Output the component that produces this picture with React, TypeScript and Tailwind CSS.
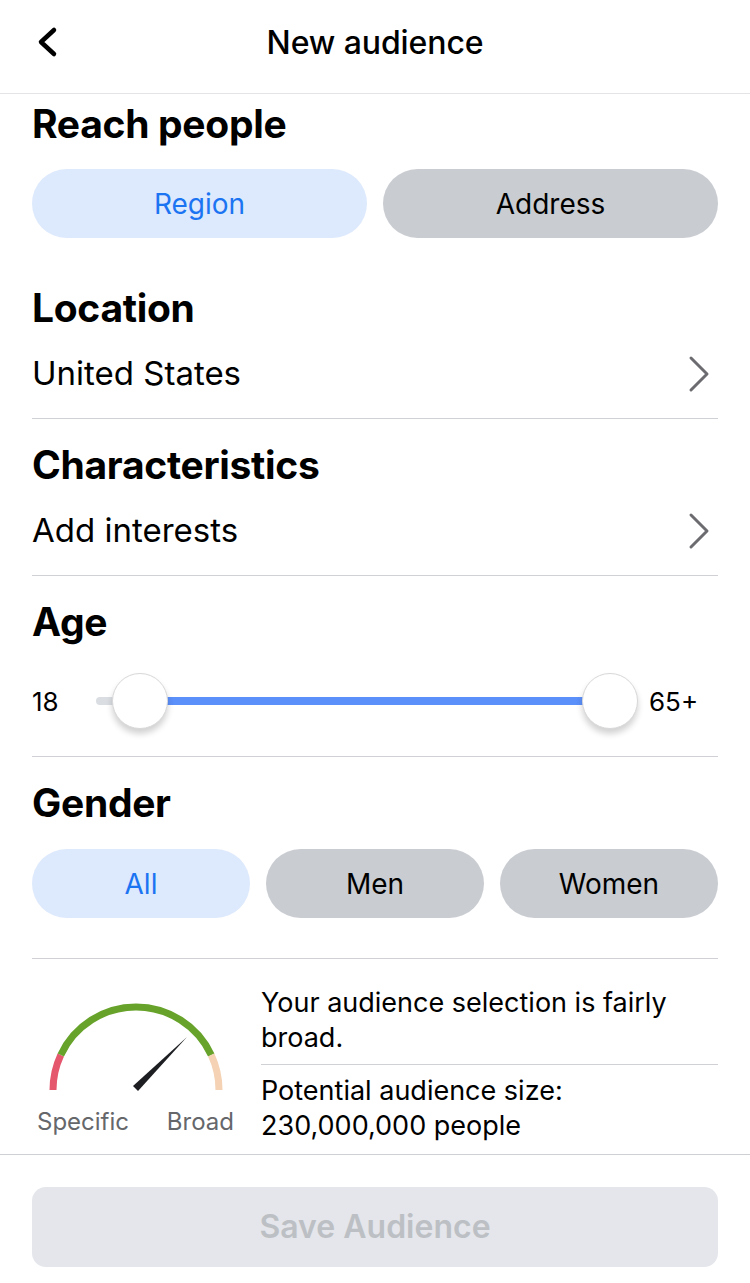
function Segmented({ options, active, cols }: { options: string[]; active: number; cols: string }) {
  return (
    <div className={`grid ${cols} gap-[16px]`}>
      {options.map((o, i) => (
        <button
          key={o}
          className={
            "flex h-[69px] items-center justify-center rounded-full text-[28px] " +
            (i === active ? "bg-[#dde9fc] text-[#1b74f2]" : "bg-[#c9ccd1] text-black")
          }
        >
          {o}
        </button>
      ))}
    </div>
  );
}

function Heading({ children }: { children: React.ReactNode }) {
  return <h2 className="h-[44px] text-[39px] font-bold leading-[44px] tracking-[-0.3px] text-black">{children}</h2>;
}

function Chevron() {
  return (
    <svg width="24" height="38" viewBox="0 0 24 38" className="mr-[6px]">
      <polyline points="3,3 19,19 3,35" fill="none" stroke="#6b6b70" strokeWidth="3" strokeLinecap="round" strokeLinejoin="round" />
    </svg>
  );
}

function LinkRow({ label }: { label: string }) {
  return (
    <div className="flex h-[89px] items-center justify-between border-b border-[#d0d1d5]">
      <span className="text-[33px] text-black">{label}</span>
      <Chevron />
    </div>
  );
}

function Gauge() {
  const cx = 104;
  const cy = 96;
  const r = 83;
  const pt = (deg: number) => {
    const a = (deg * Math.PI) / 180;
    return `${cx + r * Math.cos(a)} ${cy - r * Math.sin(a)}`;
  };
  return (
    <svg width="210" height="100" viewBox="0 0 210 100" className="block">
      <path d={`M ${pt(180)} A ${r} ${r} 0 0 1 ${pt(155)}`} fill="none" stroke="#e4576d" strokeWidth="7" />
      <path d={`M ${pt(155)} A ${r} ${r} 0 0 1 ${pt(25)}`} fill="none" stroke="#67a32b" strokeWidth="7" />
      <path d={`M ${pt(25)} A ${r} ${r} 0 0 1 ${pt(0)}`} fill="none" stroke="#f4d2b3" strokeWidth="7" />
      <polygon points="101,92 106,97 155,43" fill="#1c1e21" />
    </svg>
  );
}

export default function App() {
  return (
    <div className="flex h-[1283px] w-[750px] flex-col bg-white font-['Inter',sans-serif] text-black">
      <header className="relative flex h-[94px] shrink-0 items-center justify-center border-b border-[#e4e4e6] pb-[8px]">
        <svg width="26" height="36" viewBox="0 0 26 36" className="absolute left-[34px] top-[24px]">
          <polyline points="20,6 7,18 20,30" fill="none" stroke="#000" strokeWidth="4.5" strokeLinecap="round" strokeLinejoin="round" />
        </svg>
        <h1 className="text-[32px] font-medium tracking-[-0.1px]">New audience</h1>
      </header>

      <main className="flex-1 px-[32px]">
        <div className="mt-[8px]">
          <Heading>Reach people</Heading>
        </div>
        <div className="mt-[23px]">
          <Segmented options={["Region", "Address"]} active={0} cols="grid-cols-2" />
        </div>

        <div className="mt-[48px]">
          <Heading>Location</Heading>
          <LinkRow label="United States" />
        </div>

        <div className="mt-[24px]">
          <Heading>Characteristics</Heading>
          <LinkRow label="Add interests" />
        </div>

        <div className="mt-[24px]">
          <Heading>Age</Heading>
          <div className="flex h-[113px] items-center border-b border-[#d0d1d5] pt-[2px]">
            <span className="w-[64px] text-[26px]">18</span>
            <div className="relative h-[56px] flex-1">
              <div className="absolute left-0 top-[24px] h-[8px] w-[30px] rounded-full bg-[#dadde1]" />
              <div className="absolute left-[42px] right-[28px] top-[24px] h-[8px] bg-[#5b8ff9]" />
              <div className="absolute left-[16px] top-0 h-[56px] w-[56px] rounded-full border border-[#d8d8da] bg-white shadow-[0_5px_6px_rgba(0,0,0,0.18)]" />
              <div className="absolute right-0 top-0 h-[56px] w-[56px] rounded-full border border-[#d8d8da] bg-white shadow-[0_5px_6px_rgba(0,0,0,0.18)]" />
            </div>
            <span className="w-[80px] pl-[11px] text-[26px]">65+</span>
          </div>
        </div>

        <div className="mt-[24px]">
          <Heading>Gender</Heading>
          <div className="mt-[24px] border-b border-[#d0d1d5] pb-[40px]">
            <Segmented options={["All", "Men", "Women"]} active={0} cols="grid-cols-3" />
          </div>
        </div>

        <div className="flex pt-[35px]">
          <div className="w-[229px] shrink-0">
            <Gauge />
            <div className="mt-[13px] flex w-[202px] justify-between pl-[5px] text-[24px] leading-[30px] text-[#65676b]">
              <span>Specific</span>
              <span>Broad</span>
            </div>
          </div>
          <div className="flex-1 text-[27px] leading-[35px]">
            <p className="-mt-[9px] border-b border-[#d0d1d5] pb-[9px]">Your audience selection is fairly broad.</p>
            <p className="pt-[8px]">
              Potential audience size:
              <br />
              230,000,000 people
            </p>
          </div>
        </div>
      </main>

      <footer className="shrink-0 border-t border-[#cfd0d4] px-[32px] pb-[16px] pt-[32px]">
        <button className="flex h-[80px] w-full items-center justify-center rounded-[14px] bg-[#e4e6eb] text-[32px] font-semibold text-[#bcc0c4]">
          Save Audience
        </button>
      </footer>
    </div>
  );
}
